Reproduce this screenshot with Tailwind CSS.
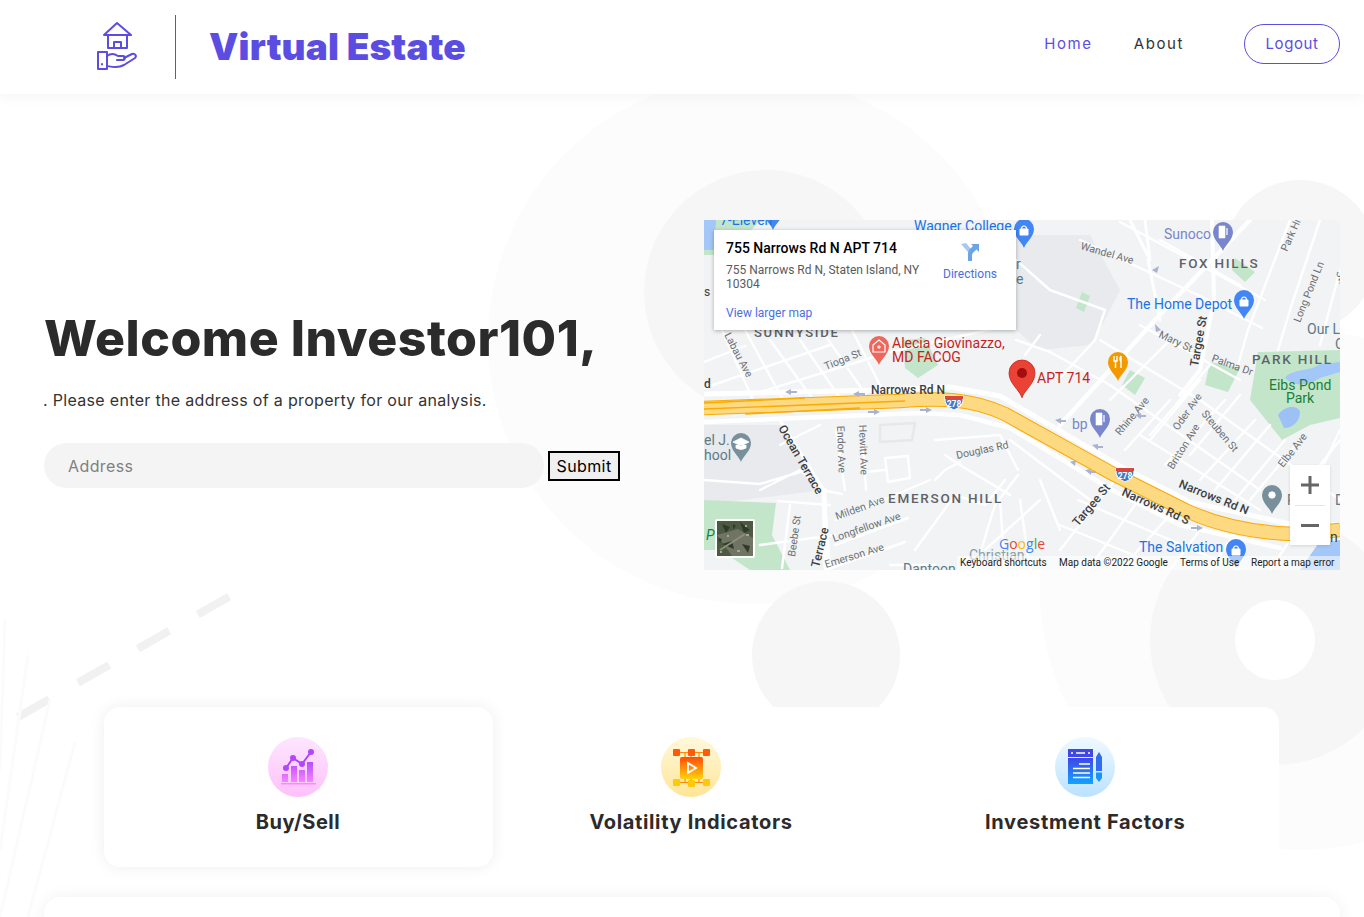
<!DOCTYPE html>
<html lang="en">
<head>
  <meta charset="UTF-8" />
  <meta name="viewport" content="width=device-width, initial-scale=1.0" />
  <title>Virtual Estate</title>
  <script src="https://cdn.jsdelivr.net/npm/@tailwindcss/browser@4"></script>
</head>
<body class="bg-white font-['Inter',sans-serif] text-[#2b2b2b]">
<div class="relative h-screen overflow-hidden">

  <!-- decorative background shapes -->
  <svg class="absolute inset-0 w-full h-full" viewBox="0 0 1364 917" fill="none">
    <circle cx="752" cy="340" r="264" fill="#fcfcfc"/>
    <circle cx="1300" cy="590" r="260" fill="#fcfcfc"/>
    <circle cx="766" cy="292" r="122" fill="#f6f6f6"/>
    <circle cx="1300" cy="256" r="76" fill="#f6f6f6"/>
    <circle cx="826" cy="655" r="74" fill="#f6f6f6"/>
    <circle cx="1275" cy="640" r="125" fill="#f6f6f6"/>
    <circle cx="1275" cy="640" r="40" fill="#fff"/>
    <path d="M18 717 L232 595" stroke="#f1f1f1" stroke-width="8" stroke-dasharray="36 33"/>
    <path d="M0 770 L5 620 M0 850 L28 655 M0 917 L50 700 M28 917 L75 742" stroke="#fbfbfb" stroke-width="3"/>
  </svg>

  <!-- navbar -->
  <header class="relative h-[94px] bg-white shadow-[0_2px_14px_rgba(0,0,0,0.05)] flex items-center pl-[97px] pr-6">
    <svg class="w-10 h-[50px]" viewBox="0 0 40 50" fill="none" stroke="#5b4de2" stroke-width="2" stroke-linejoin="round" stroke-linecap="round">
      <path d="M7 13 L20 1 L34 13 Z"/>
      <path d="M11 13 V26 H30 V13"/>
      <path d="M17 26 V20 H24 V26"/>
      <rect x="1" y="30" width="9" height="17" />
      <path d="M5 42 V42.500"/>
      <path d="M10 34 C14 31 18 32 21 34 H26 C28.500 34 28.500 38 26 38 H20"/>
      <path d="M27 36 L35 32 C38 31 40 34 38 36 L27 43 C21 46 16 45 10 44"/>
    </svg>
    <div class="w-px h-16 bg-[#5b4de2] ml-[38px] mr-[33px] -mt-px"></div>
    <a class="font-['Inter',sans-serif] font-black text-[37px] leading-none text-[#5b4de2] tracking-[0.15px] -mt-[2px]">Virtual Estate</a>
    <nav class="ml-auto flex items-center text-[15px] tracking-[1.6px] -mt-[6px]">
      <a class="text-[#5b4de2]">Home</a>
      <a class="ml-[41px] text-[#333]">About</a>
      <a class="ml-[60px] w-24 h-10 rounded-full border border-[#5b4de2] text-[#5b4de2] flex items-center justify-center tracking-[0.6px]">Logout</a>
    </nav>
  </header>

  <main class="relative">
    <!-- hero -->
    <section class="flex pl-[44px] pt-[126px]">
      <div class="w-[660px] pt-[88px]">
        <h1 class="text-[50px] leading-[60px] font-extrabold tracking-[0.5px] text-[#2b2b2b] whitespace-nowrap">Welcome Investor101,</h1>
        <p class="mt-[20px] -ml-px text-[16px] leading-6 tracking-[0.32px] text-[#333]">. Please enter the address of a property for our analysis.</p>
        <form class="mt-[31px] flex items-center">
          <input type="text" placeholder="Address" class="w-[500px] h-[45px] rounded-full bg-[#f4f4f4] pl-6 text-[16px] tracking-[0.4px] placeholder:text-[#808080]" />
          <button type="button" class="ml-1 w-[72px] h-[30px] border-2 border-black bg-[#f0f0f0] text-[16px] text-black tracking-[0.4px]">Submit</button>
        </form>
      </div>

      <!-- map -->
      <div class="relative w-[636px] h-[350px] overflow-hidden bg-[#f1f3f4] font-['Roboto',sans-serif]">
        <svg class="absolute inset-0 w-full h-full" viewBox="704 220 636 350" fill="none" font-family="Roboto, sans-serif">
          <!-- land use -->
          <path d="M1016 235 L1090 235 L1120 290 L1105 320 L1090 345 L1040 350 L1016 330 Z" fill="#e8eaed"/>
          <path d="M704 425 L780 425 L822 490 L704 505 Z" fill="#e8eaed"/>
          <path d="M704 220 L760 220 L730 255 L704 255 Z" fill="#c3e6cb"/>
          <path d="M704 220 L716 220 L714 250 L704 250 Z" fill="#a3c7f8"/>
          <path d="M704 500 L776 503 L772 535 L790 570 L750 570 L720 550 L704 550 Z" fill="#c3e6cb"/>
          <path d="M1258 352 L1340 350 L1340 418 L1310 425 L1282 440 L1250 400 Z" fill="#c3e6cb"/>
          <path d="M1285 378 C1292 368 1310 372 1320 364 L1340 362 L1340 372 L1320 378 C1310 385 1295 388 1285 378 Z" fill="#a3c7f8"/>
          <path d="M1278 415 C1285 405 1298 405 1300 412 C1300 422 1292 428 1284 428 Z" fill="#9dc0f7"/>
          <path d="M1318 544 L1340 540 L1340 570 L1300 570 Z" fill="#a3c7f8"/>
          <path d="M903 340 L925 338 L938 365 L918 378 L905 368 Z" fill="#c3e6cb"/>
          <path d="M1210 362 L1240 368 L1228 392 L1205 385 Z" fill="#c3e6cb"/>
          <path d="M1082 292 L1090 296 L1084 312 L1076 308 Z M1235 258 L1255 272 L1245 282 L1232 270 Z M1130 370 L1145 378 L1135 395 L1122 385 Z" fill="#c3e6cb"/>

          <!-- streets -->
          <g stroke="#fff" stroke-width="2.400" stroke-linecap="round" stroke-linejoin="round">
            <path d="M722 330 L752 398 M745 330 L782 398 M770 340 L812 398 M800 340 L840 398 M825 335 L868 398 M852 330 L885 395"/>
            <path d="M704 362 L745 346 M704 388 L830 345 M760 392 L890 352 L1010 325"/>
            <path d="M1016 260 L1050 290 L1105 310 L1095 340 L1060 378 M1016 340 L1050 352 L1110 385 M1040 335 L1025 355"/>
            <path d="M1080 240 L1200 296 L1262 328 M1120 222 L1265 300 M1160 240 L1240 285"/>
            <path d="M1290 220 L1248 330 L1238 365 M1320 220 L1290 310 L1278 350 M1340 270 L1320 345"/>
            <path d="M1100 340 L1200 400 L1340 500 M1140 325 L1240 380 M1110 385 L1260 490 M1140 435 L1260 510 M1200 380 L1150 440 M1240 395 L1190 455 M1270 425 L1215 490 M1300 440 L1250 500 M1170 340 L1110 400 M1210 365 L1150 435 M1340 440 L1300 490"/>
            <path d="M1225 400 L1165 465 M1255 420 L1200 480 M1285 440 L1235 500 M1170 400 L1125 450"/>
            <path d="M1115 480 L1060 550 M1140 498 L1088 570 M1170 515 L1120 570 M1200 530 L1170 570 M1230 540 L1210 570 M1078 500 L1240 570 M1060 525 L1170 570"/>
            <path d="M1340 430 L1295 525 M1300 525 L1270 570"/>
            <path d="M836 430 L845 490 M862 425 L866 490 M865 472 L885 470 M885 458 L908 456 L910 478 L888 482 Z"/>
            <path d="M880 425 L915 423 L912 440 L880 442 Z" stroke="#e6e8ea"/>
            <path d="M780 445 L820 425 M760 490 L800 470 L822 490 L842 494 M704 480 L760 484 L800 472"/>
            <path d="M778 501 L830 505 M790 505 L782 568 M760 545 L835 535"/>
            <path d="M824 490 L830 568"/>
            <path d="M836 520 L930 480 M835 545 L908 518 M826 570 L905 542"/>
            <path d="M935 440 L1000 435 L1018 470 M945 455 L960 465 M960 465 L1010 495 M935 480 L945 470 L960 462 M915 550 L955 495 L985 505 L1005 480 M975 570 L995 505 L1018 475 M1010 440 L1050 470 L1090 500 M1000 500 L1005 570 M1020 500 L1030 570 M1040 480 L1060 530"/>
            <path d="M985 550 L1040 500 M890 565 L935 565"/>
          </g>
          <g stroke="#fff" stroke-linecap="round" stroke-linejoin="round" fill="none">
            <path d="M1250 220 L1155 320 L1060 425" stroke-width="4.500"/>
            <path d="M1212 220 L1214 300 L1200 370 L1180 395" stroke-width="4"/>
            <path d="M1145 220 L1150 260 L1130 220 M1148 260 L1160 320" stroke-width="3"/>
            <path d="M704 394 L880 390 L950 387 L1000 396 L1120 466 L1190 502 L1290 524 L1340 525" stroke-width="5"/>
            <path d="M704 422 L920 413 L960 415 L1010 428 L1112 490 L1180 525 L1280 548" stroke-width="4.500"/>
            <path d="M824 490 L826 568" stroke-width="5"/>
            <path d="M780 420 L825 492" stroke-width="3"/>
          </g>

          <!-- highway -->
          <path d="M704 408 L900 401 C940 398 970 398 1005 414 L1113 474 L1187 511 C1220 526 1260 533 1295 534 L1340 530" stroke="#f9ab00" stroke-width="14.500"/>
          <path d="M704 408 L900 401 C940 398 970 398 1005 414 L1113 474 L1187 511 C1220 526 1260 533 1295 534 L1340 530" stroke="#fdd982" stroke-width="12.500"/>
          <path d="M704 409 L905 401" stroke="#f9ab00" stroke-width="1.400"/>
          <path d="M704 403 L805 398 M745 414 L860 408" stroke="#f9ab00" stroke-width="1.400"/>

          <!-- arrows on streets -->
          <g fill="#aab2cf">
            <path d="M785 392 l6 -3 v2 h6 v2 h-6 v2 Z M853 394 l6 -3 v2 h6 v2 h-6 v2 Z M880 412 l-6 -3 v2 h-6 v2 h6 v2 Z M932 410 l-6 -3 v2 h-6 v2 h6 v2 Z M1055 420 l6 -2 v2 h5 v2 h-5 v2 Z M1135 415 l6 -2 v2 h5 v2 h-5 v2 Z M1092 445 l6 -1 v2 h5 v2 h-5 v2 Z M1085 470 l6 -1 v2 h5 v2 h-5 v2 Z"/>
            <path d="M1152 270 l5 3 l2 -7 Z M1156 332 l5 -2 l-6 -6 Z M1070 462 l6 -2 l-1 6 Z M1203 528 l-6 -3 v2 h-6 v2 h6 v2 Z"/>
          </g>

          <!-- pins -->
          <defs>
            <path id="pin" d="M0 19 C-2 13 -10 8 -10 0 A10 10 0 1 1 10 0 C10 8 2 13 0 19Z"/>
          </defs>
          <use href="#pin" transform="translate(773 211)" fill="#4285f4"/>
          <use href="#pin" transform="translate(1024 229)" fill="#4285f4"/>
          <use href="#pin" transform="translate(1223 232)" fill="#7986cb"/>
          <use href="#pin" transform="translate(1244 300)" fill="#4285f4"/>
          <use href="#pin" transform="translate(879 346)" fill="#ee675c"/>
          <use href="#pin" transform="translate(1118 362)" fill="#f29900"/>
          <use href="#pin" transform="translate(1100 419)" fill="#7986cb"/>
          <use href="#pin" transform="translate(741 443)" fill="#78909c"/>
          <use href="#pin" transform="translate(1272 495)" fill="#78909c"/>
          <use href="#pin" transform="translate(1236 549)" fill="#4285f4"/>
          <use href="#pin" transform="translate(1022 373) scale(1.3)" fill="#ea4335" stroke="#c5221f" stroke-width="0.600"/>
          <circle cx="1022" cy="373" r="5" fill="#a50e0e"/>

          <!-- pin glyphs -->
          <g fill="#fff" stroke="#fff">
            <path d="M1020 229 h8 v6 h-8 Z M1240 300 h8 v6 h-8 Z M1232 549 h8 v6 h-8 Z" stroke-width="1"/>
            <path d="M1021.500 229 a2.500 3 0 0 1 5 0 M1241.500 300 a2.500 3 0 0 1 5 0 M1233.500 549 a2.500 3 0 0 1 5 0" fill="none" stroke-width="1.200"/>
            <path d="M1219 226 h6 v12 h-6 Z M1096 413 h6 v12 h-6 Z" stroke-width="0.600"/>
            <path d="M1227 228 v7 M1104 415 v7" stroke-width="1.200"/>
            <path d="M873 345 L879 340 L885 345 V352 H873 Z" fill="none" stroke-width="1.200"/>
            <path d="M877 347 h4 M879 345 v4" stroke-width="1"/>
            <path d="M1114 356 v5 h3 v-5 M1115.500 361 v7 M1121 356 v12 M1121 356 q-2 3 0 6" stroke-width="1.400" fill="none"/>
            <path d="M733 442 L741 438 L749 442 L741 446 Z M736 445 v3 q5 3 10 0 v-3" stroke-width="0.800"/>
            <circle cx="1272" cy="495" r="3.200"/>
          </g>

          <!-- interstate shields -->
          <g font-size="8.500" font-weight="700" text-anchor="middle">
            <path d="M945 396 h18 v2 q1 8 -9 12 q-10 -4 -9 -12 Z" fill="#3f78c9" stroke="#fff"/>
            <path d="M945 396 h18 v3 h-18 Z" fill="#d8473c"/>
            <text x="954" y="407" fill="#fff">278</text>
            <path d="M1116 468 h18 v2 q1 8 -9 12 q-10 -4 -9 -12 Z" fill="#3f78c9" stroke="#fff"/>
            <path d="M1116 468 h18 v3 h-18 Z" fill="#d8473c"/>
            <text x="1125" y="479" fill="#fff">278</text>
          </g>

          <!-- place labels -->
          <g fill="#5f6368" font-size="13.500" font-weight="500" letter-spacing="1.750">
            <text x="754" y="337" font-size="13">SUNNYSIDE</text>
            <text x="1179" y="268">FOX HILLS</text>
            <text x="1252" y="364">PARK HILL</text>
            <text x="888" y="503">EMERSON HILL</text>
          </g>
          <g font-size="14">
            <text x="720" y="225" fill="#1a73e8">7-Eleven</text>
            <text x="914" y="231" fill="#1a73e8">Wagner College</text>
            <text x="1164" y="239" fill="#7986cb">Sunoco</text>
            <text x="1127" y="309" fill="#1a73e8">The Home Depot</text>
            <text x="1139" y="552" fill="#1a73e8">The Salvation</text>
            <text x="1072" y="429" fill="#7986cb">bp</text>
            <text x="892" y="348" fill="#c5221f">Alecia Giovinazzo,</text>
            <text x="892" y="362" fill="#c5221f">MD FACOG</text>
            <text x="1037" y="383" fill="#c5221f">APT 714</text>
            <text x="1269" y="390" fill="#188038">Eibs Pond</text>
            <text x="1286" y="403" fill="#188038">Park</text>
            <text x="1307" y="334" fill="#5b7a8a">Our L</text>
            <text x="1335" y="349" fill="#5b7a8a">C</text>
            <text x="704" y="445" fill="#5b7a8a">el J.</text>
            <text x="704" y="460" fill="#5b7a8a">hool</text>
            <text x="1016" y="269" fill="#5b7a8a">r</text>
            <text x="1016" y="284" fill="#5b7a8a">e</text>
            <text x="1287" y="505" fill="#5b7a8a">P</text>
            <text x="1335" y="505" fill="#5b7a8a">D</text>
            <text x="706" y="540" fill="#188038" font-style="italic">P</text>
            <text x="969" y="560" fill="#5b7a8a" opacity="0.7">Christian</text>
            <text x="903" y="574" fill="#5b7a8a">Dantoon</text>
            <text x="1330" y="542" fill="#3c4043">n I</text>
          </g>

          <!-- street labels -->
          <g font-size="10.500" fill="#6b7074">
            <text transform="translate(724 335) rotate(62)">Labau Ave</text>
            <text transform="translate(826 370) rotate(-22)">Tioga St</text>
            <text transform="translate(1080 249) rotate(16)">Wandel Ave</text>
            <text transform="translate(1287 252) rotate(-66)">Park Hill</text>
            <text transform="translate(1300 323) rotate(-68)">Long Pond Ln</text>
            <text transform="translate(1336 272) rotate(72)">Stuards</text>
            <text transform="translate(1158 337) rotate(25)">Mary St</text>
            <text transform="translate(1211 361) rotate(20)">Palma Dr</text>
            <text transform="translate(1120 436) rotate(-50)">Rhine Ave</text>
            <text transform="translate(1178 431) rotate(-55)">Oder Ave</text>
            <text transform="translate(1201 414) rotate(50)">Steuben St</text>
            <text transform="translate(1173 470) rotate(-58)">Britton Ave</text>
            <text transform="translate(1283 468) rotate(-52)">Elbe Ave</text>
            <text transform="translate(837 426) rotate(88)">Endor Ave</text>
            <text transform="translate(859 425) rotate(88)">Hewitt Ave</text>
            <text transform="translate(957 459) rotate(-12)">Douglas Rd</text>
            <text transform="translate(837 520) rotate(-20)">Milden Ave</text>
            <text transform="translate(834 542) rotate(-19)">Longfellow Ave</text>
            <text transform="translate(826 568) rotate(-17)">Emerson Ave</text>
            <text transform="translate(795 557) rotate(-82)">Beebe St</text>
          </g>
          <g font-size="12" font-weight="500" fill="#3c4043">
            <text x="871" y="394">Narrows Rd N</text>
            <text x="704" y="388">d</text>
            <text x="704" y="296" font-weight="400">s</text>
            <text transform="translate(778 428) rotate(60)">Ocean Terrace</text>
            <text transform="translate(819 568) rotate(-76)">Terrace</text>
            <text transform="translate(1198 367) rotate(-80)">Targee St</text>
            <text transform="translate(1078 527) rotate(-50)">Targee St</text>
            <text transform="translate(1178 487) rotate(22)">Narrows Rd N</text>
            <text transform="translate(1121 495) rotate(24)">Narrows Rd S</text>
          </g>

          <!-- satellite thumbnail -->
          <rect x="715" y="519" width="40" height="39" rx="2" fill="#fff"/>
          <rect x="717" y="521" width="36" height="35" fill="#4d5a42"/>
          <path d="M717 535 L738 529 L753 538 V556 H732 Z" fill="#6f7562"/>
          <path d="M722 524 l8 3 l-4 6 Z M740 522 l10 8 l-6 3 Z M722 544 l10 -3 l2 8 Z M742 544 l8 2 l-2 7 Z M733 524 l3 2 l-3 3 Z M718 538 l4 1 l-2 4 Z" fill="#2f3a2a"/>
          <path d="M727 535 h2 v2 h-2 Z M746 534 h3 v2 h-3 Z M737 550 h3 v2 h-3 Z M720 551 h2 v2 h-2 Z M745 525 h2 v2 h-2 Z" fill="#a7a58f"/>
          <path d="M720 550 L745 534" stroke="#8d8f7c" stroke-width="2"/>

          <!-- google mark -->
          <text x="999" y="549" font-size="14" font-family="Open Sans, sans-serif"><tspan fill="#4285f4">G</tspan><tspan fill="#ea4335">o</tspan><tspan fill="#fbbc04">o</tspan><tspan fill="#4285f4">g</tspan><tspan fill="#34a853">l</tspan><tspan fill="#ea4335">e</tspan></text>

          <!-- attribution -->
          <rect x="957" y="556" width="383" height="14" fill="#fff" fill-opacity="0.55"/>
          <g font-size="10" fill="#1d1d1d">
            <text x="960" y="566">Keyboard shortcuts</text>
            <text x="1059" y="566">Map data ©2022 Google</text>
            <text x="1180" y="566">Terms of Use</text>
            <text x="1251" y="566">Report a map error</text>
          </g>
        </svg>

        <!-- info window -->
        <div class="absolute left-[10px] top-[10px] w-[302px] h-[100px] bg-white shadow-[0_1px_4px_rgba(0,0,0,0.3)] pl-3 pt-2">
          <div class="flex">
            <div class="w-[205px]">
              <p class="text-[14px] leading-5 font-medium text-black whitespace-nowrap">755 Narrows Rd N APT 714</p>
              <p class="mt-[5px] text-[12px] leading-[14px] text-[#5b5b5b]">755 Narrows Rd N, Staten Island, NY 10304</p>
            </div>
            <div class="ml-[9px] w-[60px] flex flex-col items-center pt-[5px]">
              <svg class="w-[18px] h-[18px]" viewBox="0 0 18 18">
                <path d="M0 1 L5 0 L10 6 L7 9 Z" fill="#a6c9f3"/>
                <path d="M7 18 V10 C7 7 9 6 12 3 L10 1 H18 V9 L15.500 6.500 C13 9 11 10 11 12 V18 Z" fill="#6ba5e7"/>
              </svg>
              <span class="mt-[6px] text-[12px] leading-[14px] text-[#4a6ee0]">Directions</span>
            </div>
          </div>
          <a class="block mt-[15px] text-[12px] leading-[14px] text-[#4a6ee0]">View larger map</a>
        </div>

        <!-- zoom control -->
        <div class="absolute left-[586px] top-[245px] w-10 h-[80px] bg-white shadow-[0_1px_3px_rgba(0,0,0,0.12)] flex flex-col items-center">
          <svg class="mt-[11px] w-[18px] h-[18px]" viewBox="0 0 18 18" fill="#666"><path d="M7.500 0 h3 v7.500 h7.500 v3 h-7.500 v7.500 h-3 v-7.500 h-7.500 v-3 h7.500 Z"/></svg>
          <div class="mt-[11px] w-[30px] h-px bg-[#e6e6e6]"></div>
          <div class="mt-[18px] w-[18px] h-[3px] bg-[#666]"></div>
        </div>
      </div>
    </section>

    <!-- feature cards -->
    <section class="mt-[137px] ml-[104px] w-[1175px] h-[160px] bg-white rounded-2xl grid grid-cols-3">
      <div class="bg-white rounded-2xl shadow-[0_0_16px_rgba(0,0,0,0.07)] w-[389px] flex flex-col items-center pt-[30px] pr-px">
        <svg class="w-[60px] h-[60px]" viewBox="0 0 60 60">
          <defs>
            <linearGradient id="pinkBg" x1="0" y1="0" x2="0" y2="1"><stop offset="0" stop-color="#fde6ff"/><stop offset="1" stop-color="#ffc0fb"/></linearGradient>
            <linearGradient id="pinkFg" x1="0" y1="0" x2="0" y2="1"><stop offset="0" stop-color="#b84bff"/><stop offset="1" stop-color="#ff8bff"/></linearGradient>
          </defs>
          <circle cx="30" cy="30" r="30" fill="url(#pinkBg)"/>
          <path d="M14 37 h6 v8 h-6 Z M23 29 h6 v16 h-6 Z M31 33 h6 v12 h-6 Z M39 25 h6 v20 h-6 Z M13 46 h35 v1.500 h-35 Z" fill="url(#pinkFg)"/>
          <path d="M18 31 L25 21 L34 27 L43 15" stroke="#a93aff" stroke-width="1.800" fill="none"/>
          <circle cx="18" cy="31" r="3" fill="#b246ff"/><circle cx="25" cy="21" r="3" fill="#b246ff"/><circle cx="34" cy="27" r="3" fill="#b246ff"/><circle cx="43" cy="15" r="3" fill="#b246ff"/>
        </svg>
        <h3 class="mt-[10px] text-[20px] leading-[30px] font-bold tracking-[0.55px]">Buy/Sell</h3>
      </div>
      <div class="flex flex-col items-center pt-[30px] -ml-px">
        <svg class="w-[60px] h-[60px]" viewBox="0 0 60 60">
          <defs>
            <linearGradient id="yellowBg" x1="0" y1="0" x2="0" y2="1"><stop offset="0" stop-color="#fff8dc"/><stop offset="1" stop-color="#ffe596"/></linearGradient>
            <linearGradient id="orangeFg" x1="0" y1="0" x2="0" y2="1"><stop offset="0" stop-color="#ff4d0a"/><stop offset="1" stop-color="#ffd20a"/></linearGradient>
          </defs>
          <circle cx="30" cy="30" r="30" fill="url(#yellowBg)"/>
          <g fill="url(#orangeFg)">
            <rect x="12" y="12" width="7" height="7" rx="1" fill="#ff5a0a"/><rect x="27" y="12" width="7" height="7" rx="1" fill="#ff5a0a"/><rect x="42" y="12" width="7" height="7" rx="1" fill="#ff5a0a"/>
            <rect x="12" y="42" width="7" height="7" rx="1" fill="#ffc90a"/><rect x="27" y="43" width="7" height="7" rx="1" fill="#ffc90a"/><rect x="42" y="42" width="7" height="7" rx="1" fill="#ffc90a"/>
            <rect x="19" y="20" width="23" height="22" rx="2"/>
          </g>
          <path d="M19 15.500 H27 M34 15.500 H42 M30 19 V20 M24 15.500 V20 M38 15.500 V20 M19 45.500 H27 M34 45.500 H42 M30 42 V43 M24 42 V45.500 M38 42 V45.500" stroke="#ff8a0a" stroke-width="1.200" fill="none"/>
          <path d="M27 26 L35 31 L27 36 Z" fill="none" stroke="#fff" stroke-width="1.800"/>
        </svg>
        <h3 class="mt-[10px] text-[20px] leading-[30px] font-bold tracking-[0.65px]">Volatility Indicators</h3>
      </div>
      <div class="flex flex-col items-center pt-[30px] pl-[4px]">
        <svg class="w-[60px] h-[60px]" viewBox="0 0 60 60">
          <defs>
            <linearGradient id="blueBg" x1="0" y1="0" x2="0" y2="1"><stop offset="0" stop-color="#f0f9ff"/><stop offset="1" stop-color="#bbe2ff"/></linearGradient>
            <linearGradient id="blueFg" x1="0" y1="0" x2="0" y2="1"><stop offset="0" stop-color="#3f46e8"/><stop offset="1" stop-color="#10a4ff"/></linearGradient>
          </defs>
          <circle cx="30" cy="30" r="30" fill="url(#blueBg)"/>
          <rect x="13" y="12" width="25" height="8" fill="#4049e6"/>
          <rect x="13" y="21" width="25" height="26" fill="url(#blueFg)"/>
          <path d="M21 16 h9 M16 16 h2 M33 16 h2" stroke="#fff" stroke-width="1.600"/>
          <path d="M24 27 h11 M18 31.500 h17 M18 36 h17 M18 40.500 h17" stroke="#fff" stroke-width="1.700"/>
          <path d="M41 20 L44 15 L47 20 V34 H41 Z" fill="#2f6cf2"/>
          <path d="M41 35.500 H47 V41 L44 45 L41 41 Z" fill="#1a92fb"/>
        </svg>
        <h3 class="mt-[10px] text-[20px] leading-[30px] font-bold tracking-[0.68px]">Investment Factors</h3>
      </div>
    </section>

    <!-- next card, cut off by the fold -->
    <section class="mt-[30px] ml-[44px] w-[1296px] h-[200px] bg-white rounded-2xl shadow-[0_0_16px_rgba(0,0,0,0.06)]"></section>
  </main>
</div>
</body>
</html>
